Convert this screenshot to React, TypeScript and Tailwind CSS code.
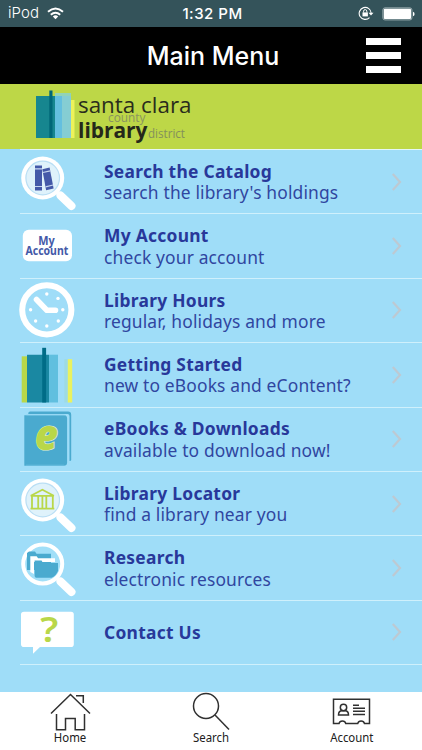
import React from "react";

const Lens = ({ children }: { children: React.ReactNode }) => (
  <>
    <path d="M40.5 45.5L51.5 56" stroke="#fff" strokeWidth="8" strokeLinecap="round" />
    <path d="M36 41L41 46" stroke="#fff" strokeWidth="4" />
    <circle cx="22.7" cy="28" r="21.5" fill="#fff" />
    <circle cx="22.7" cy="28" r="16.8" fill="#dff2fb" stroke="#b9def4" strokeWidth="1.2" />
    {children}
  </>
);

const icons = {
  search: (
    <Lens>
      <g fill="#4459a8">
        <path d="M15 15.5h7v25h-7z" />
        <path d="M22.3 19.2l7.3-1.6 4 20.8-7.5 1.8z" />
      </g>
      <path d="M15 18.8h7M15 36.5h7M22.8 22.5l7.5-1.7M25.6 36.8l7.5-1.8" stroke="#c5d5ef" strokeWidth="1.2" />
    </Lens>
  ),
  account: (
    <>
      <rect x="2.8" y="15.8" width="49.2" height="31.5" rx="6" fill="#fff" />
      <g fill="#4459a8" fontFamily="'Noto Sans', sans-serif" fontWeight="700" fontSize="12">
        <text x="18.3" y="30.8" textLength="16.5" lengthAdjust="spacingAndGlyphs">My</text>
        <text x="5.5" y="40.9" textLength="42.8" lengthAdjust="spacingAndGlyphs">Account</text>
      </g>
    </>
  ),
  hours: (
    <>
      <circle cx="26.8" cy="31.8" r="24.6" fill="none" stroke="#fff" strokeWidth="6" />
      <path d="M16.5 21.5L26.8 32.2H35.5" fill="none" stroke="#fff" strokeWidth="5.6" strokeLinecap="round" strokeLinejoin="round" />
      <g fill="#fff">
        <circle cx="26.8" cy="16" r="1.7" />
        <circle cx="38" cy="20.4" r="1.7" />
        <circle cx="42.8" cy="31.8" r="1.7" />
        <circle cx="38.3" cy="43" r="1.7" />
        <circle cx="26.8" cy="48" r="1.7" />
        <circle cx="15.6" cy="43" r="1.7" />
        <circle cx="10.6" cy="31.8" r="1.7" />
      </g>
    </>
  ),
  started: (
    <>
      <path d="M1.7 13.3h5.3v46.2h-5.3z" fill="#b9d749" />
      <path d="M7 11.7h22v47.8h-22z" fill="#1a88a2" />
      <path d="M29 11.7h9v47.8h-9z" fill="#60bfdf" />
      <path d="M22.2 4.8h3.9v54.7h-3.9z" fill="#006c87" />
      <path d="M44.4 16.2h3.4v43.3h-3.4z" fill="#9edbe2" />
      <path d="M47.8 16.2h4.4v43.3h-4.4z" fill="#eaf25f" />
    </>
  ),
  ebooks: (
    <>
      <path d="M8.3 7v-.7q0-1.7 1.8-1.7H48q3.2 0 3.2 3.2V53q0 1-1.7 1V9q0-2-2-2z" fill="#4aaacf" />
      <path d="M4.3 8.3h39.5q3.3 0 3.3 3.3v43.8q0 3.3-3.3 3.3H4.3z" fill="#4aaacf" />
      <path d="M6.5 8.3H44q2 0 2.4 1.2M6 58.2h38" stroke="#6fc0df" strokeWidth=".8" fill="none" />
      <g fontFamily="'Open Sans', sans-serif" fontWeight="800" fontStyle="italic" fontSize="42">
        <text x="15" y="43.2" textLength="23" lengthAdjust="spacingAndGlyphs" fill="#b9d749" stroke="#e6f2c8" strokeWidth="1.2" paintOrder="stroke">e</text>
      </g>
    </>
  ),
  locator: (
    <Lens>
      <path d="M10.8 23.8L22.4 17.8 33.8 23.8zM12 24v12M18.2 24v12M26.3 24v12M32.8 24v12M10.5 36.6h23.8M22.4 24v12" fill="none" stroke="#b9d749" strokeWidth="1.8" />
    </Lens>
  ),
  research: (
    <>
      <path d="M40.5 45.5L51.5 56" stroke="#fff" strokeWidth="8" strokeLinecap="round" />
      <path d="M36 41L41 46" stroke="#fff" strokeWidth="4" />
      <circle cx="22.7" cy="28" r="19.5" fill="#a1dff8" stroke="#fff" strokeWidth="4" />
      <path d="M7 17l2-1.5h6l1.5 2.3H31V34H7z" fill="#4aaacf" />
      <path d="M10.3 36V20.3h6.3l1.5 2H35V26H14V38z" fill="#fff" />
      <path d="M14.6 24.5h7l1.3 2.5H38V35q-2 5-6.5 6.7H16q-1.4-.5-1.4-2z" fill="#4aaacf" />
    </>
  ),
  contact: (
    <>
      <path d="M4 11.8H51q2.8 0 2.8 2.8V44.3q0 2.8-2.8 2.8H20L13 53.8V47H4q-3 0-3-2.8V14.6q0-2.8 3-2.8z" fill="#fff" />
      <text x="20.2" y="41.6" textLength="18" lengthAdjust="spacingAndGlyphs" fontFamily="'Noto Sans', sans-serif" fontWeight="600" fontSize="34" fill="#b9d749">?</text>
    </>
  ),
};

const rows: { icon: keyof typeof icons; title: string; sub?: string }[] = [
  { icon: "search", title: "Search the Catalog", sub: "search the library's holdings" },
  { icon: "account", title: "My Account", sub: "check your account" },
  { icon: "hours", title: "Library Hours", sub: "regular, holidays and more" },
  { icon: "started", title: "Getting Started", sub: "new to eBooks and eContent?" },
  { icon: "ebooks", title: "eBooks & Downloads", sub: "available to download now!" },
  { icon: "locator", title: "Library Locator", sub: "find a library near you" },
  { icon: "research", title: "Research", sub: "electronic resources" },
  { icon: "contact", title: "Contact Us" },
];

const StatusBar = () => (
  <div className="grid h-[27px] shrink-0 grid-cols-3 items-center bg-[#34535a] text-[15px] text-white">
    <div className="flex items-center gap-2 pl-2">
      <span className="font-light tracking-[0.1px]">iPod</span>
      <svg width="17" height="13" viewBox="0 0 17 13" fill="none" stroke="#fff" strokeWidth="2">
        <path d="M1 4.7Q8.5-1.8 16 4.7M3.8 7.7Q8.5 3.7 13.2 7.7" />
        <path d="M5.8 9.4Q8.5 7.2 11.2 9.4L8.5 12.2z" fill="#fff" stroke="none" />
      </svg>
    </div>
    <span className="pt-px pl-[3px] text-center text-[15px] font-medium tracking-[0.5px]">1:32 PM</span>
    <div className="flex items-center justify-end gap-2 pr-[7px]">
      <svg width="16" height="15" viewBox="0 0 16 15" fill="none" stroke="#fff">
        <path d="M13.2 7.3A6 6 0 1 0 11.5 11.6" strokeWidth="1.1" />
        <path d="M10.5 6.7h5l-2.5 2.8z" fill="#fff" stroke="none" />
        <path d="M4.5 6.4h5.4v4H4.5z" fill="#fff" stroke="none" />
        <path d="M5.6 6.5V5.2a1.6 1.6 0 0 1 3.2 0v1.3" />
      </svg>
      <svg width="33" height="14" viewBox="0 0 33 14">
        <rect x=".9" y=".9" width="29" height="12" rx="2" fill="none" stroke="#9fb0b3" />
        <rect x="1.8" y="1.8" width="27.2" height="10.2" rx="1" fill="#fff" />
        <path d="M31 4.8q1.6.4 1.6 2.2T31 9.2z" fill="#fff" />
      </svg>
    </div>
  </div>
);

const Logo = () => (
  <svg className="ml-[30px]" width="170" height="65" viewBox="30 84 170 65">
    <path d="M36 96h19v42H36z" fill="#16868f" />
    <path d="M55 93h16v45H55z" fill="#64bfdf" />
    <path d="M62 93h9v45h-9z" fill="#85cdd3" />
    <path d="M55 93h16v3H55z" fill="#92d3b7" />
    <path d="M71 100h3.5v38H71z" fill="#edf25a" />
    <path d="M49.3 90.5h3.2V138h-3.2z" fill="#006778" />
    <g fontFamily="'Open Sans', sans-serif">
      <text x="108" y="122.3" fontSize="12.5" fill="#8a9360" textLength="37.5" lengthAdjust="spacingAndGlyphs">county</text>
      <text x="78" y="113.3" fontSize="22" fontWeight="500" fill="#292c1c" textLength="113.5" lengthAdjust="spacingAndGlyphs">santa clara</text>
      <text x="78" y="137.8" fontSize="22" fontWeight="700" fill="#25281a" textLength="69.5" lengthAdjust="spacingAndGlyphs">library</text>
      <text x="148" y="138" fontSize="12.5" fill="#84905c" textLength="37" lengthAdjust="spacingAndGlyphs">district</text>
    </g>
  </svg>
);

const tabs = [
  {
    label: "Home",
    icon: <path d="M51 712.5L70.5 693.5L90 712.5M76 694.7H83.3V702M56.5 713V728.8H65.5V717.5H75.2V728.8H84.5V713" />,
    view: "50 691 41 40",
  },
  {
    label: "Search",
    icon: <><circle cx="206" cy="706" r="12.5" /><path d="M215 715L229 729.5" /></>,
    view: "190 692 41 40",
  },
  {
    label: "Account",
    icon: (
      <>
        <path d="M333.5 699.2H369.5V723.6H364.5A3.5 3.5 0 0 0 357.7 723.6H345.8A3.5 3.5 0 0 0 339 723.6H333.5z" />
        <circle cx="343.5" cy="707.5" r="3.2" />
        <path d="M338.5 715Q338.5 710.7 342 710.7H345Q348.5 710.7 348.5 715zM353 705.2H359M353 708.2H365M353 711.3H365M353 714.4H365" />
      </>
    ),
    view: "331 692 41 40",
  },
];

export default function App() {
  return (
    <div className="flex h-[750px] w-[422px] flex-col overflow-hidden bg-[#9fddf8] font-['Inter','Liberation_Sans',sans-serif]">
      <StatusBar />
      <header className="grid h-[57px] shrink-0 grid-cols-[1fr_auto_1fr] items-center bg-black text-white">
        <h1 className="col-start-2 ml-1 pt-0.5 text-[25px] font-medium">Main Menu</h1>
        <button className="mr-[21px] flex flex-col gap-[7px] justify-self-end" aria-label="Menu">
          <span className="h-[7px] w-[35px] bg-white" />
          <span className="h-[7px] w-[35px] bg-white" />
          <span className="h-[7px] w-[35px] bg-white" />
        </button>
      </header>
      <div className="h-[65px] shrink-0 bg-[#bdd747]">
        <Logo />
      </div>
      <main className="grow">
        <div className="ml-5 h-px bg-[#e4f7f6]" />
        <ul className="font-['Noto_Sans',sans-serif] text-[#28389a]">
          {rows.map((row) => (
            <li key={row.icon} className="ml-5 flex h-[64.4px] items-center border-b border-[#cff0fc]">
              <svg className="shrink-0 overflow-visible" width="60" height="64" viewBox="0 0 60 64">{icons[row.icon]}</svg>
              <div className="ml-6 w-[270px] shrink-0 origin-left scale-x-[0.94] pb-px text-[18.5px] leading-[21.3px] tracking-[0.17px] whitespace-nowrap">
                <div className="font-bold tracking-[0.3px]">{row.title}</div>
                {row.sub && <div className="text-[#3046a0]">{row.sub}</div>}
              </div>
              <svg className="ml-[17px] shrink-0" width="12" height="20" viewBox="0 0 12 20" fill="none" stroke="#bdc9d2" strokeWidth="2.2">
                <path d="M1.8 2L9 10L1.8 18" />
              </svg>
            </li>
          ))}
        </ul>
      </main>
      <nav className="grid h-[58px] shrink-0 grid-cols-3 bg-white font-['Noto_Sans',sans-serif] text-[12px] leading-[14px] text-[#202020]">
        {tabs.map((tab) => (
          <a key={tab.label} className="flex flex-col items-center">
            <svg width="41" height="39" viewBox={tab.view} preserveAspectRatio="xMidYMin slice" fill="none" stroke="#303030" strokeWidth="1.5">{tab.icon}</svg>
            <span className="scale-x-[0.95]">{tab.label}</span>
          </a>
        ))}
      </nav>
    </div>
  );
}
